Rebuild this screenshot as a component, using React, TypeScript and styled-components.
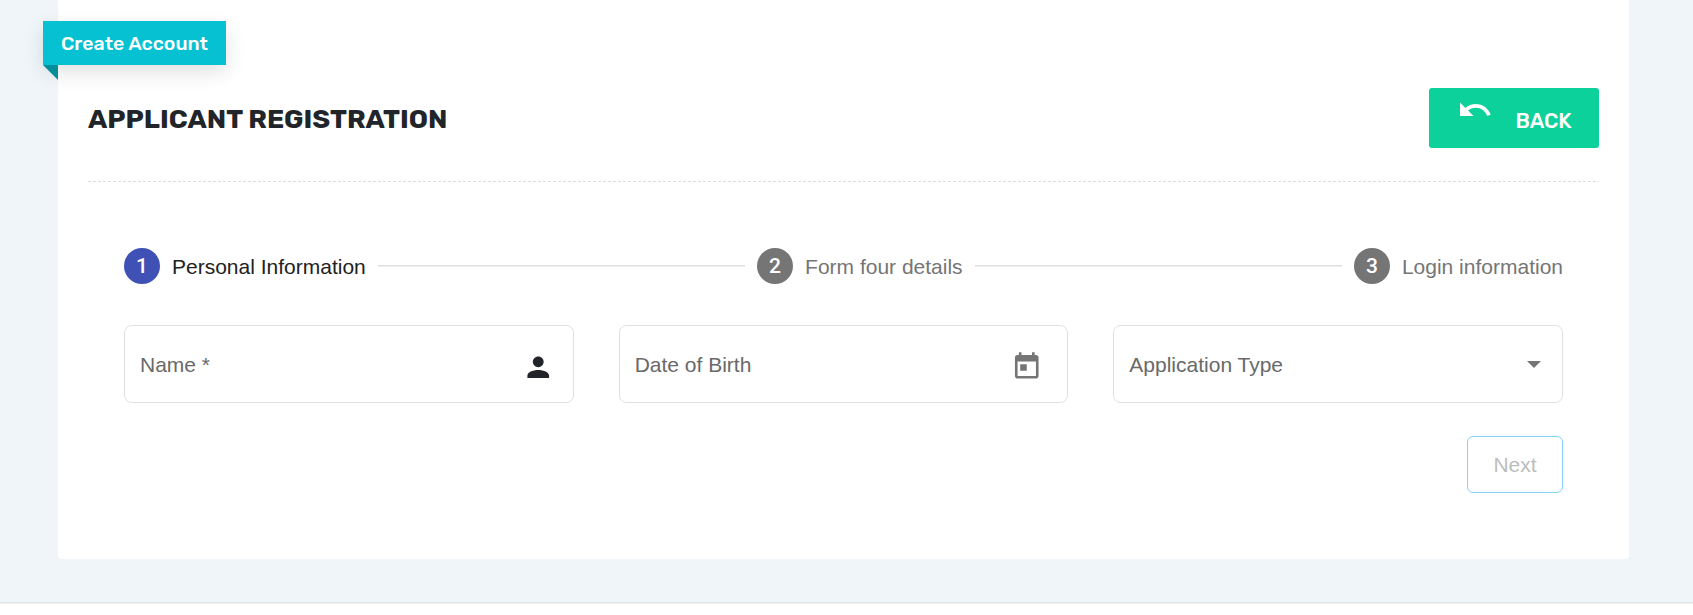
import React from "react";
import styled, { createGlobalStyle } from "styled-components";

const GlobalStyle = createGlobalStyle`
  *, *::before, *::after { box-sizing: border-box; }
  body {
    margin: 0;
    background: #fff;
    color: #212529;
    font-family: "Liberation Sans", Arial, sans-serif;
  }
`;

const Page = styled.div`
  height: 615px;
  display: flex;
  flex-direction: column;
  overflow: hidden;
`;

const Content = styled.main`
  height: 602px;
  padding: 0 64px 43px 58px;
  background: #f0f5f9;
`;

const Footer = styled.footer`
  flex: 1;
  border-top: 1px solid #e1e1e1;
  box-shadow: inset 0 1px 0 #f0f0f0;
  background: #fff;
`;

const Card = styled.section`
  position: relative;
  height: 559px;
  padding: 88px 30px 0;
  border-radius: 0 0 4px 4px;
  background: #fff;
`;

const Ribbon = styled.div`
  position: absolute;
  top: 21px;
  left: -15px;
  width: 183px;
  height: 44px;
  padding-left: 18px;
  background: #05c1d1;
  box-shadow: 0 7px 20px rgba(0, 0, 0, 0.12);
  color: #fff;
  font: 500 19.5px/45px Rubik, Roboto, sans-serif;
  white-space: nowrap;

  &::after {
    content: "";
    position: absolute;
    top: 100%;
    left: 0;
    border-top: 15px solid #048e99;
    border-left: 15px solid transparent;
  }
`;

const Header = styled.header`
  display: flex;
  justify-content: space-between;
  height: 94px;
`;

const Title = styled.h1`
  margin: 0;
  font: 700 27px/63px Rubik, Roboto, sans-serif;
  white-space: nowrap;
`;

const BackButton = styled.button`
  display: flex;
  align-items: flex-start;
  gap: 23px;
  width: 170px;
  height: 60px;
  padding: 4px 0 0 27.5px;
  border: 0;
  border-radius: 3px;
  background: #0cd19a;
  color: #fff;
  font: 500 21px/57px Rubik, Roboto, sans-serif;
`;

const Divider = styled.div`
  height: 1px;
  margin-top: -1px;
  background: repeating-linear-gradient(90deg, #dcdcdc 0 3px, transparent 3px 5px);
`;

const Stepper = styled.ol`
  display: flex;
  align-items: center;
  gap: 12px;
  height: 36px;
  margin: 66px 36px 41px;
  padding: 0;
  list-style: none;
`;

const Step = styled.li<{ $active?: boolean }>`
  display: flex;
  align-items: center;
  gap: 12px;
  color: ${(p) => (p.$active ? "#212121" : "#757575")};
  font-size: 21px;
  line-height: 36px;
  white-space: nowrap;
`;

const StepNumber = styled.span<{ $active?: boolean }>`
  width: 36px;
  height: 36px;
  border-radius: 50%;
  background: ${(p) => (p.$active ? "#3f51b5" : "#757575")};
  color: #fff;
  font-family: Roboto, sans-serif;
  font-weight: 500;
  line-height: 37px;
  text-align: center;
`;

const StepLabel = styled.span`
  padding-top: 2px;
`;

const StepLine = styled.li`
  flex: 1;
  height: 2px;
  margin-top: -1px;
  background: linear-gradient(#dedede 50%, #eeeeee 50%);
`;

const Fields = styled.div`
  display: grid;
  grid-template-columns: repeat(3, 1fr);
  gap: 45px;
  margin: 0 36px;
`;

const Field = styled.div<{ $end: number }>`
  display: flex;
  align-items: center;
  justify-content: space-between;
  height: 78px;
  padding: 0 ${(p) => p.$end}px 0 15px;
  border: 1px solid #e0e0e0;
  border-radius: 7.5px;
  color: #696969;
  font-size: 21px;
  line-height: 24px;
`;

const FieldLabel = styled.span`
  padding-top: 2px;
`;

const Caret = styled.span`
  border: 7.5px solid transparent;
  border-top-color: #757575;
  border-bottom: 0;
`;

const Actions = styled.div`
  display: flex;
  justify-content: flex-end;
  margin: 33px 36px 0;
`;

const NextButton = styled.button`
  width: 96px;
  height: 57px;
  padding: 0;
  border: 1px solid #81d4fa;
  border-radius: 6px;
  background: #fff;
  color: #bdbdbd;
  font: 21px/55px "Liberation Sans", Arial, sans-serif;
`;

const Icon = ({ size, color, path }: { size: number; color: string; path: string }) => (
  <svg width={size} height={size} viewBox="0 0 24 24" fill={color}>
    <path d={path} />
  </svg>
);

const undo =
  "M12.5 8c-2.65 0-5.05.99-6.9 2.6L2 7v9h9l-3.62-3.62c1.39-1.16 3.16-1.88 5.12-1.88 3.54 0 6.55 2.31 7.6 5.5l2.37-.78C21.08 11.03 17.15 8 12.5 8z";
const person =
  "M12 12c2.21 0 4-1.79 4-4s-1.79-4-4-4-4 1.79-4 4 1.79 4 4 4zm0 2c-2.67 0-8 1.34-8 4v2h16v-2c0-2.66-5.33-4-8-4z";
const calendar =
  "M19 3h-1V1h-2v2H8V1H6v2H5c-1.11 0-1.99.9-1.99 2L3 19c0 1.1.89 2 2 2h14c1.1 0 2-.9 2-2V5c0-1.1-.9-2-2-2zm0 16H5V8h14v11zM7 10h5v5H7z";

const FieldIcon = styled.span<{ $drop?: number }>`
  display: flex;
  margin-top: ${(p) => p.$drop ?? 0}px;
`;

const steps = ["Personal Information", "Form four details", "Login information"];

export default function App() {
  return (
    <Page>
      <GlobalStyle />
      <Content>
        <Card>
          <Ribbon>Create Account</Ribbon>
          <Header>
            <Title>APPLICANT REGISTRATION</Title>
            <BackButton type="button">
              <Icon size={36} color="#fff" path={undo} />
              BACK
            </BackButton>
          </Header>
          <Divider />
          <Stepper>
            {steps.map((label, i) => (
              <React.Fragment key={label}>
                {i > 0 && <StepLine aria-hidden />}
                <Step $active={i === 0}>
                  <StepNumber $active={i === 0}>{i + 1}</StepNumber>
                  <StepLabel>{label}</StepLabel>
                </Step>
              </React.Fragment>
            ))}
          </Stepper>
          <Fields>
            <Field $end={18.5}>
              <FieldLabel>Name *</FieldLabel>
              <FieldIcon $drop={6}>
                <Icon size={32.5} color="#212529" path={person} />
              </FieldIcon>
            </Field>
            <Field $end={25}>
              <FieldLabel>Date of Birth</FieldLabel>
              <FieldIcon $drop={6}>
                <Icon size={31.5} color="#757575" path={calendar} />
              </FieldIcon>
            </Field>
            <Field $end={21}>
              <FieldLabel>Application Type</FieldLabel>
              <Caret />
            </Field>
          </Fields>
          <Actions>
            <NextButton type="button" disabled>
              Next
            </NextButton>
          </Actions>
        </Card>
      </Content>
      <Footer />
    </Page>
  );
}
